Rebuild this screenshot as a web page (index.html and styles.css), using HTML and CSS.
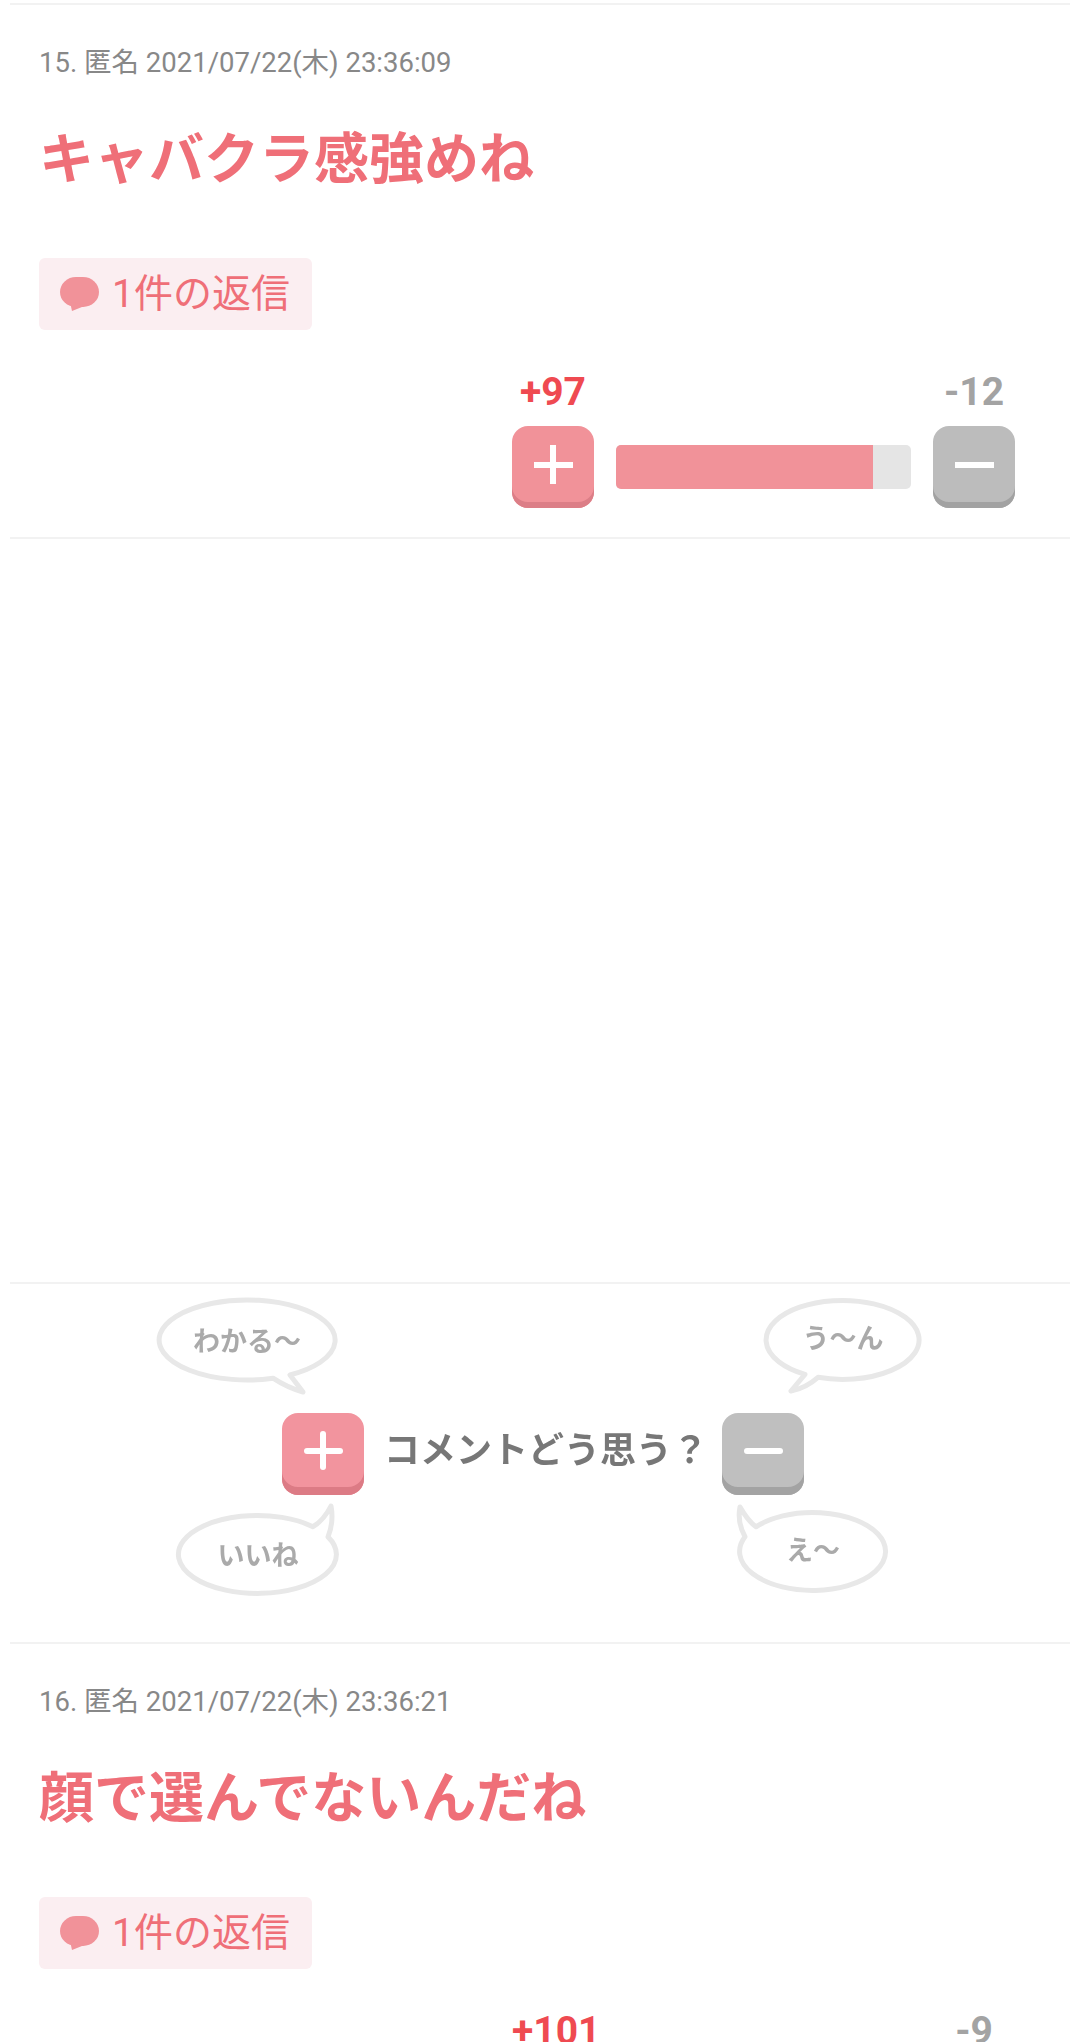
FILE: index.html
```html
<!DOCTYPE html>
<html lang="ja">
<head>
    <meta charset="UTF-8">
    <meta name="viewport" content="width=device-width, initial-scale=1.0">
    <title>コメント</title>
    <link rel="stylesheet" href="styles.css">
</head>
<body>
    <div class="thread">
        <section class="comment">
            <p class="meta">15. 匿名 2021/07/22(木) 23:36:09</p>
            <h2 class="comment-text">キャバクラ感強めね</h2>
            <a href="#" class="reply-badge">
                <svg class="reply-icon" viewBox="0 0 39 34"><rect width="39" height="30" rx="16" ry="15"/><path d="M10 25 L12 34 L27 28z"/></svg>
                <span class="reply-label">1件の返信</span>
            </a>
            <div class="votes">
                <span class="count plus-count">+97</span>
                <span></span>
                <span class="count minus-count">-12</span>
                <button class="vote-btn plus-btn"><span class="sign plus-sign"></span></button>
                <div class="bar"><div class="bar-fill" style="width: 87%"></div></div>
                <button class="vote-btn minus-btn"><span class="sign"></span></button>
            </div>
        </section>

        <div class="ad-space"></div>

        <section class="prompt">
            <svg class="bubbles" viewBox="0 0 1060 358">
                <path d="M263 94.2 Q278 104 293 108 L280 90.9 A88 40 0 1 0 263 94.2 Z"/>
                <path d="M303 242.7 Q314 236 321 222 Q324 238 318 252.9 A79 39 0 1 1 303 242.7 Z"/>
                <path d="M795 90.3 L781 107 Q796 104 808 93.3 A76.5 39.5 0 1 0 795 90.3 Z"/>
                <path d="M746 242.8 Q738 237 730 223 Q727 238 735 252.7 A73 39 0 1 0 746 242.8 Z"/>
                <text x="237" y="67">わかる〜</text>
                <text x="248" y="281">いいね</text>
                <text x="833" y="64">う〜ん</text>
                <text x="803" y="276">え〜</text>
            </svg>
            <button class="vote-btn plus-btn round-sign"><span class="sign plus-sign"></span></button>
            <span class="prompt-text">コメントどう思う？</span>
            <button class="vote-btn minus-btn round-sign"><span class="sign"></span></button>
        </section>

        <section class="comment">
            <p class="meta">16. 匿名 2021/07/22(木) 23:36:21</p>
            <h2 class="comment-text">顔で選んでないんだね</h2>
            <a href="#" class="reply-badge">
                <svg class="reply-icon" viewBox="0 0 39 34"><rect width="39" height="30" rx="16" ry="15"/><path d="M10 25 L12 34 L27 28z"/></svg>
                <span class="reply-label">1件の返信</span>
            </a>
            <div class="votes">
                <span class="count plus-count">+101</span>
                <span></span>
                <span class="count minus-count">-9</span>
                <button class="vote-btn plus-btn"><span class="sign plus-sign"></span></button>
                <div class="bar"><div class="bar-fill" style="width: 92%"></div></div>
                <button class="vote-btn minus-btn"><span class="sign"></span></button>
            </div>
        </section>
    </div>
</body>
</html>
```

FILE: styles.css
```css
html, body {
    margin: 0;
    height: 2042px;
    overflow: hidden;
}

body {
    background: white;
    font-family: Roboto, "Noto Sans CJK JP", sans-serif;
    padding-top: 3px;
    box-sizing: border-box;
}

.thread {
    margin: 0 10px;
    border-top: 2px solid #f2f2f2;
}

.comment {
    padding: 41px 0 29px 29px;
    border-bottom: 2px solid #f2f2f2;
}

.meta {
    margin: 0;
    font-size: 27.5px;
    line-height: 34px;
    color: #888;
}

.comment-text {
    margin: 39px 0 0;
    font-size: 55px;
    line-height: 80px;
    font-weight: bold;
    color: #ef6f78;
}

.reply-badge {
    display: inline-flex;
    align-items: center;
    box-sizing: border-box;
    height: 72px;
    margin-top: 59px;
    padding: 0 22px 0 21px;
    gap: 13px;
    background: #fbeef1;
    border-radius: 6px;
    color: #ef6f78;
    font-size: 39px;
    text-decoration: none;
    vertical-align: top;
}

.reply-label {
    padding-bottom: 8px;
}

.reply-icon {
    width: 39px;
    height: 34px;
    fill: #f19299;
}

.votes {
    display: grid;
    grid-template-columns: 82px 295px 82px;
    column-gap: 22px;
    row-gap: 14px;
    justify-content: end;
    margin-top: 42px;
    padding-right: 55px;
}

.count {
    font-size: 39px;
    line-height: 40px;
    font-weight: bold;
    text-align: center;
    white-space: nowrap;
}

.plus-count {
    color: #ef4a51;
}

.minus-count {
    color: #a3a3a3;
}

.vote-btn {
    display: flex;
    align-items: center;
    justify-content: center;
    width: 82px;
    height: 82px;
    padding: 0 0 5px;
    border: none;
    border-radius: 16px;
}

.plus-btn {
    background: #f19299;
    box-shadow: inset 0 -6px 0 #dc7e87;
}

.minus-btn {
    background: #bcbcbc;
    box-shadow: inset 0 -6px 0 #a2a2a2;
}

.sign {
    position: relative;
    display: block;
    width: 39px;
    height: 6px;
    background: white;
}

.plus-sign::after {
    content: "";
    position: absolute;
    left: 16.5px;
    top: -16.5px;
    width: 6px;
    height: 39px;
    background: white;
}

.bar {
    align-self: center;
    height: 44px;
    background: #e5e5e5;
    border-radius: 5px;
    overflow: hidden;
}

.bar-fill {
    height: 100%;
    background: #f19299;
}

.ad-space {
    height: 743px;
    border-bottom: 2px solid #f2f2f2;
}

.prompt {
    position: relative;
    display: flex;
    align-items: flex-start;
    justify-content: center;
    box-sizing: border-box;
    height: 360px;
    padding: 129px 0 0 6px;
    border-bottom: 2px solid #f2f2f2;
}

.bubbles {
    position: absolute;
    left: 0;
    top: 0;
    width: 1060px;
    height: 358px;
    filter: blur(0.5px);
}

.bubbles path {
    fill: white;
    stroke: #e8e8e8;
    stroke-width: 5;
    stroke-linejoin: round;
}

.bubbles text {
    font-size: 27px;
    font-weight: bold;
    fill: #aaa;
    text-anchor: middle;
}

.prompt-text {
    width: 324px;
    margin: 0 14px 0 20px;
    font-size: 36px;
    line-height: 76px;
    font-weight: bold;
    color: #777;
    white-space: nowrap;
    filter: blur(0.5px);
}

.round-sign {
    padding-bottom: 7px;
}

.round-sign.plus-btn {
    background: #f2949e;
    box-shadow: inset 0 -8px 0 #dc7b85;
}

.round-sign.minus-btn {
    background: #bfbfbf;
    box-shadow: inset 0 -8px 0 #a3a3a3;
}

.round-sign .sign,
.round-sign .plus-sign::after {
    border-radius: 3px;
}
```
